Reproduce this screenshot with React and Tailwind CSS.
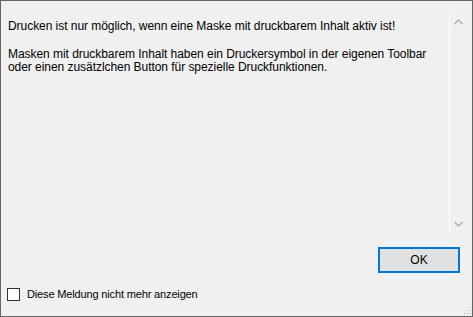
import React, { useState } from 'react';

const ChevronUp = () => (
  <svg width="9" height="6" viewBox="0 0 9 6" className="block">
    <path d="M0.5 5 L4.5 1 L8.5 5" fill="none" stroke="#a6a6a6" strokeWidth="1.2" />
  </svg>
);

const ChevronDown = () => (
  <svg width="9" height="6" viewBox="0 0 9 6" className="block">
    <path d="M0.5 1 L4.5 5 L8.5 1" fill="none" stroke="#a6a6a6" strokeWidth="1.2" />
  </svg>
);

const Grip = () => (
  <svg width="10" height="10" viewBox="0 0 10 10" className="block">
    {[[8, 2], [5, 5], [8, 5], [2, 8], [5, 8], [8, 8]].map(([x, y], i) => (
      <rect key={i} x={x} y={y} width="1" height="1" fill="#b4b4b4" />
    ))}
  </svg>
);

const App = () => {
  const [hide, setHide] = useState(false);

  return (
    <div
      className="w-[473px] h-[317px] border border-[#646464] bg-[#f0f0f0] flex flex-col text-[#000] text-[12px] leading-[13px]"
      style={{ fontFamily: '"Liberation Sans", Arial, sans-serif' }}
    >
      {/* message box with scrollbar */}
      <div className="mt-[11px] h-[222px] flex mr-[5px]">
        <div className="flex-1 pl-[7px] pt-[8px] tracking-[-0.05px]">
          <p>Drucken ist nur möglich, wenn eine Maske mit druckbarem Inhalt aktiv ist!</p>
          <p className="mt-[15px]">
            Masken mit druckbarem Inhalt haben ein Druckersymbol in der eigenen Toolbar
            <br />
            oder einen zusätzlchen Button für spezielle Druckfunktionen.
          </p>
        </div>
        <div className="w-[18px] border-l border-white flex flex-col items-center justify-between py-[7px]">
          <ChevronUp />
          <ChevronDown />
        </div>
      </div>

      {/* button row */}
      <div className="flex justify-end pr-[12px] mt-[13px]">
        <button
          type="button"
          className="w-[82px] h-[26px] border-2 border-[#0078d7] bg-[#e1e1e1] text-[12px] leading-none"
        >
          OK
        </button>
      </div>

      {/* checkbox row */}
      <div className="flex-1 flex items-end justify-between pb-[1px]">
        <label className="flex items-center gap-[7px] pl-[6px] mb-[14px] cursor-default">
          <span
            onClick={() => setHide(!hide)}
            className="w-[13px] h-[13px] border border-[#333] bg-white flex items-center justify-center"
          >
            {hide && <span className="text-[10px] leading-none">✓</span>}
          </span>
          <span className="text-[11px] tracking-[-0.15px]">Diese Meldung nicht mehr anzeigen</span>
        </label>
        <Grip />
      </div>
    </div>
  );
};

export default App;
